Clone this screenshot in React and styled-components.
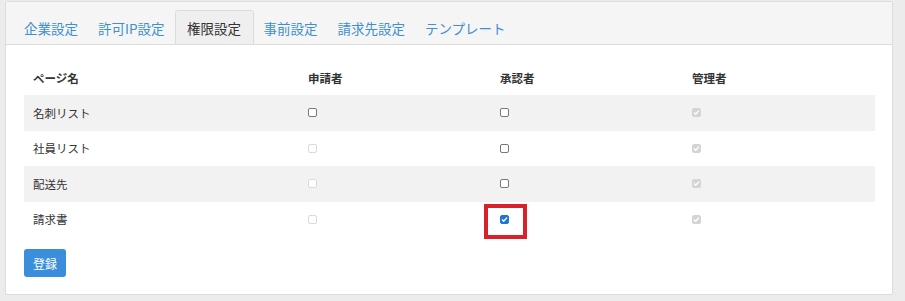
import React from 'react';
import styled, { createGlobalStyle } from 'styled-components';

const GlobalStyle = createGlobalStyle`
    html, body {
        margin: 0;
        padding: 0;
        background: #ececec;
    }
    body {
        font-family: "Noto Sans CJK JP", "Noto Sans", sans-serif;
        color: #333;
    }
`;

const Page = styled.div`
    padding: 1px 12px 6px 5px;
`;

const Panel = styled.section`
    background: #fff;
    border: 1px solid #dcdcdc;
    border-radius: 2px;
`;

const TabBar = styled.ul`
    display: flex;
    margin: 0;
    padding: 8px 0 0 8px;
    list-style: none;
    background: #f5f5f5;
    border-bottom: 1px solid #dcdcdc;
    border-radius: 2px 2px 0 0;
`;

const Tab = styled.li`
    height: 33px;
    padding: ${props => props.active ? '0 11.5px' : '0 9px'};
    margin-bottom: -1px;
    display: flex;
    align-items: center;
    font-size: 13.5px;
    color: ${props => props.active ? '#333' : '#3f8fce'};
    background: ${props => props.active ? '#efefef' : 'transparent'};
    border: 1px solid ${props => props.active ? '#dcdcdc' : 'transparent'};
    border-radius: 3px 3px 0 0;
`;

const Body = styled.div`
    padding: 15px 17px 17px 18px;
`;

const Table = styled.div`
    display: grid;
    grid-template-columns: 275px 192px 192px 1fr;
    margin-bottom: 12px;
`;

const Row = styled.div`
    display: contents;
    & > div {
        background: ${props => props.striped ? '#f2f2f2' : 'transparent'};
        height: ${props => props.head ? '35px' : '35.5px'};
    }
`;

const Cell = styled.div`
    display: flex;
    align-items: center;
    padding: 0 9px;
    font-size: 11.5px;
    font-weight: ${props => props.head ? 'bold' : 'normal'};
    color: #333;
`;

const Box = styled.span`
    position: relative;
    display: inline-flex;
    align-items: center;
    justify-content: center;
    width: 9px;
    height: 9px;
    box-sizing: border-box;
    border-radius: 2px;
    border: 1px solid ${props =>
        props.checked ? (props.disabled ? '#d4d4d4' : '#1f74dc')
        : (props.disabled ? '#dadada' : '#777')};
    background: ${props =>
        props.checked ? (props.disabled ? '#d4d4d4' : '#1f74dc') : '#fff'};
`;

const Highlight = styled.span`
    position: absolute;
    left: -17px;
    top: -12px;
    width: 43px;
    height: 35px;
    box-sizing: border-box;
    border: 4px solid #d8212b;
`;

const SubmitButton = styled.button`
    width: 42px;
    height: 28px;
    padding: 0;
    border: none;
    border-radius: 3px;
    background: #3a8edb;
    color: #fff;
    font-family: inherit;
    font-size: 12px;
`;

const Checkbox = ({ checked, disabled, marked }) => (
    <Box checked={checked} disabled={disabled}>
        {checked && (
            <svg width="7" height="7" viewBox="0 0 7 7">
                <path d="M1 3.6 L2.7 5.2 L6 1.6" fill="none" stroke="#fff" strokeWidth="1.4" />
            </svg>
        )}
        {marked && <Highlight />}
    </Box>
);

const tabs = ['企業設定', '許可IP設定', '権限設定', '事前設定', '請求先設定', 'テンプレート'];

const rows = [
    { name: '名刺リスト', applicant: { disabled: false }, approver: {} },
    { name: '社員リスト', applicant: { disabled: true }, approver: {} },
    { name: '配送先', applicant: { disabled: true }, approver: {} },
    { name: '請求書', applicant: { disabled: true }, approver: { checked: true, marked: true } },
];

export default function App() {
    return (
        <Page>
            <GlobalStyle />
            <Panel>
                <TabBar>
                    {tabs.map(t => <Tab key={t} active={t === '権限設定'}>{t}</Tab>)}
                </TabBar>
                <Body>
                    <Table>
                        <Row head>
                            <Cell head>ページ名</Cell>
                            <Cell head>申請者</Cell>
                            <Cell head>承認者</Cell>
                            <Cell head>管理者</Cell>
                        </Row>
                        {rows.map((r, i) => (
                            <Row key={r.name} striped={i % 2 === 0}>
                                <Cell>{r.name}</Cell>
                                <Cell><Checkbox disabled={r.applicant.disabled} /></Cell>
                                <Cell>
                                    <Checkbox checked={r.approver.checked} marked={r.approver.marked} />
                                </Cell>
                                <Cell><Checkbox checked disabled /></Cell>
                            </Row>
                        ))}
                    </Table>
                    <SubmitButton>登録</SubmitButton>
                </Body>
            </Panel>
        </Page>
    );
}
